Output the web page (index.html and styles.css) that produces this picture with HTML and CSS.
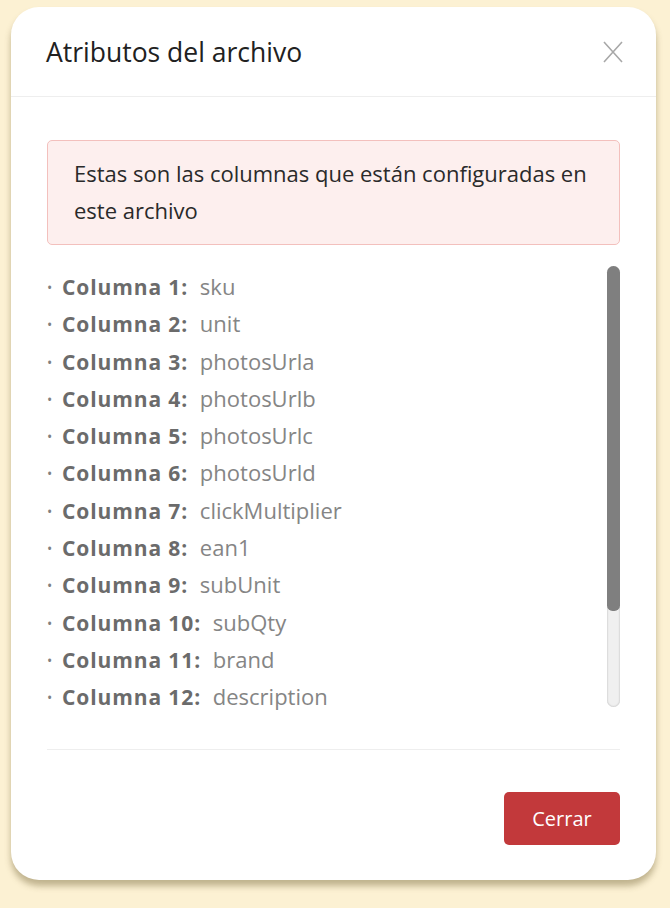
FILE: index.html
```html
<!DOCTYPE html>
<html lang="es">
<head>
<meta charset="utf-8">
<title>Atributos del archivo</title>
<link rel="stylesheet" href="styles.css">
</head>
<body>
<div class="modal">
  <div class="modal-header">
    <h2 class="modal-title">Atributos del archivo</h2>
    <button class="close-btn" aria-label="Cerrar">
      <svg width="22" height="22" viewBox="0 0 22 22"><path d="M2 1 L20 21 M20 1 L2 21" stroke="#a8a8a8" stroke-width="1.6" fill="none"/></svg>
    </button>
  </div>
  <div class="modal-body">
    <div class="alert">Estas son las columnas que están configuradas en este archivo</div>
    <div class="list-wrap">
      <ul class="columns">
        <li><b>Columna 1:</b> sku</li>
        <li><b>Columna 2:</b> unit</li>
        <li><b>Columna 3:</b> photosUrla</li>
        <li><b>Columna 4:</b> photosUrlb</li>
        <li><b>Columna 5:</b> photosUrlc</li>
        <li><b>Columna 6:</b> photosUrld</li>
        <li><b>Columna 7:</b> clickMultiplier</li>
        <li><b>Columna 8:</b> ean1</li>
        <li><b>Columna 9:</b> subUnit</li>
        <li><b>Columna 10:</b> subQty</li>
        <li><b>Columna 11:</b> brand</li>
        <li><b>Columna 12:</b> description</li>
      </ul>
      <div class="scrollbar"><div class="thumb"></div></div>
    </div>
  </div>
  <div class="modal-footer">
    <button class="btn-close">Cerrar</button>
  </div>
</div>
</body>
</html>
```
FILE: styles.css
```css
html, body {
  margin: 0;
  padding: 0;
}
body {
  background: #fcf1d3;
  font-family: "Open Sans", "Noto Sans", sans-serif;
  width: 670px;
  height: 908px;
  overflow: hidden;
}
.modal {
  margin: 7px 0 0 11px;
  width: 645px;
  height: 873px;
  background: #fff;
  border-radius: 28px;
  box-shadow: 0 6px 6px rgba(120, 105, 60, 0.45);
  display: flex;
  flex-direction: column;
  box-sizing: border-box;
}
.modal-header {
  height: 90px;
  flex: none;
  box-sizing: border-box;
  border-bottom: 1px solid #eeeeee;
  display: flex;
  align-items: center;
  justify-content: space-between;
  padding: 0 32px 0 35px;
}
.modal-title {
  margin: 0;
  font-size: 26.5px;
  font-weight: 400;
  color: #212121;
}
.close-btn {
  border: 0;
  background: none;
  padding: 0;
  width: 22px;
  height: 22px;
  display: flex;
}
.modal-body {
  padding: 43px 36px 0 36px;
}
.alert {
  background: #fdefee;
  border: 1px solid #f3c0bd;
  border-radius: 5px;
  padding: 14px 20px 15px 26px;
  font-size: 22px;
  line-height: 37px;
  color: #2a2a2a;
}
.list-wrap {
  margin-top: 21px;
  height: 441px;
  display: flex;
}
.columns {
  list-style: none;
  margin: 0;
  padding: 2px 0 0 0;
  flex: 1;
  height: 441px;
  box-sizing: border-box;
  overflow: visible;
}
.columns li {
  font-size: 22px;
  height: 37.3px;
  line-height: 37.3px;
  color: #858585;
  white-space: nowrap;
}
.columns li::before {
  content: "•";
  color: #808080;
  font-size: 14px;
  line-height: 1;
  display: inline-block;
  width: 15px;
  vertical-align: 2px;
}
.columns li b {
  font-size: 21px;
  line-height: 1;
  color: #6b6b6b;
  font-weight: 700;
  letter-spacing: 0.9px;
  margin-right: 6px;
}
.scrollbar {
  width: 13px;
  flex: none;
  background: #f0f0f0;
  border-radius: 7px;
  box-shadow: inset 0 0 2px rgba(0, 0, 0, 0.3);
  display: flex;
  flex-direction: column;
}
.thumb {
  height: 345px;
  background: #7f7f7f;
  border-radius: 7px 7px 6px 6px;
}
.modal-footer {
  margin: 42px 36px 0 36px;
  border-top: 1px solid #eeeeee;
  padding-top: 42px;
  display: flex;
  justify-content: flex-end;
}
.btn-close {
  width: 116px;
  height: 53px;
  background: #c2393b;
  color: #fff;
  border: 0;
  border-radius: 5px;
  font-family: "Open Sans", "Noto Sans", sans-serif;
  font-size: 20px;
}
```
